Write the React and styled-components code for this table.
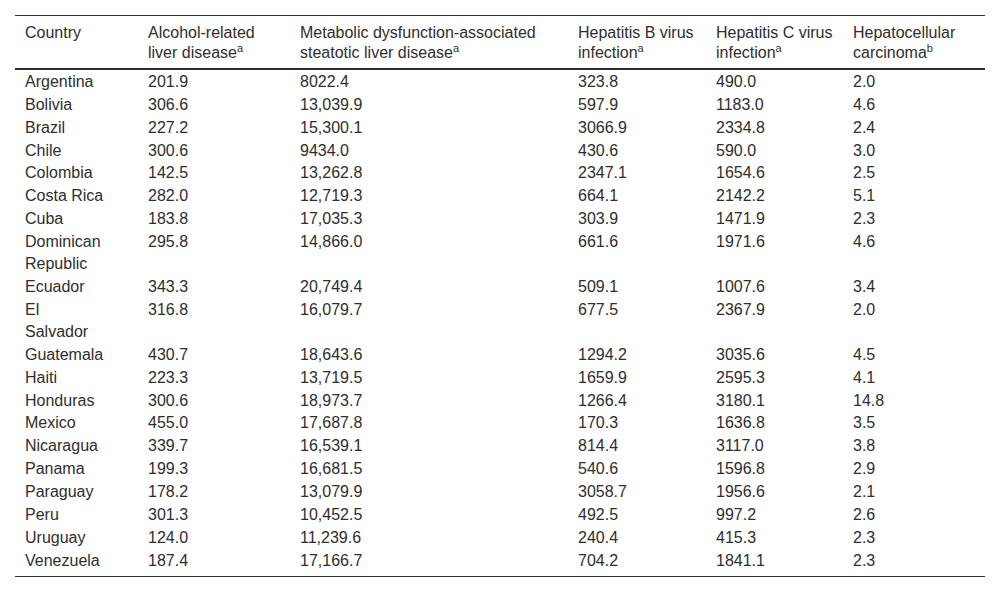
import React from 'react';
import styled, { createGlobalStyle } from 'styled-components';

const GlobalStyle = createGlobalStyle`
  html, body {
    margin: 0;
    padding: 0;
    background: #fff;
  }
  body {
    font-family: "Liberation Sans", Arial, sans-serif;
    color: #2e2e2e;
  }
`;

const Page = styled.div`
  padding: 15px;
`;

const Table = styled.table`
  width: 970px;
  table-layout: fixed;
  border-collapse: collapse;
  border-top: 1px solid #2e2e2e;
  border-bottom: 1px solid #2e2e2e;
  font-size: 16px;
`;

const HeadRow = styled.tr`
  border-bottom: 2px solid #2e2e2e;
`;

const HeadCell = styled.th`
  width: ${p => p.$w}px;
  box-sizing: border-box;
  text-align: left;
  vertical-align: top;
  font-weight: 400;
  line-height: 20px;
  padding: 7px 8px 5px 10px;
`;

const Row = styled.tr`
  &:last-child td {
    padding-bottom: 4px;
  }
`;

const Cell = styled.td`
  vertical-align: top;
  line-height: 22px;
  padding: 0.9px 0 0 10px;
`;

const CountryName = styled.span`
  display: block;
  max-width: 80px;
`;

const Sup = styled.sup`
  font-size: 11px;
  line-height: 0;
  vertical-align: 6px;
`;

const columns = [
  { w: 123, label: 'Country' },
  { w: 152, label: 'Alcohol-related liver disease', note: 'a' },
  { w: 278, label: 'Metabolic dysfunction-associated steatotic liver disease', note: 'a' },
  { w: 138, label: 'Hepatitis B virus infection', note: 'a' },
  { w: 137, label: 'Hepatitis C virus infection', note: 'a' },
  { w: 142, label: 'Hepatocellular carcinoma', note: 'b' },
];

const rows = [
  ['Argentina', '201.9', '8022.4', '323.8', '490.0', '2.0'],
  ['Bolivia', '306.6', '13,039.9', '597.9', '1183.0', '4.6'],
  ['Brazil', '227.2', '15,300.1', '3066.9', '2334.8', '2.4'],
  ['Chile', '300.6', '9434.0', '430.6', '590.0', '3.0'],
  ['Colombia', '142.5', '13,262.8', '2347.1', '1654.6', '2.5'],
  ['Costa Rica', '282.0', '12,719.3', '664.1', '2142.2', '5.1'],
  ['Cuba', '183.8', '17,035.3', '303.9', '1471.9', '2.3'],
  ['Dominican Republic', '295.8', '14,866.0', '661.6', '1971.6', '4.6'],
  ['Ecuador', '343.3', '20,749.4', '509.1', '1007.6', '3.4'],
  ['El Salvador', '316.8', '16,079.7', '677.5', '2367.9', '2.0'],
  ['Guatemala', '430.7', '18,643.6', '1294.2', '3035.6', '4.5'],
  ['Haiti', '223.3', '13,719.5', '1659.9', '2595.3', '4.1'],
  ['Honduras', '300.6', '18,973.7', '1266.4', '3180.1', '14.8'],
  ['Mexico', '455.0', '17,687.8', '170.3', '1636.8', '3.5'],
  ['Nicaragua', '339.7', '16,539.1', '814.4', '3117.0', '3.8'],
  ['Panama', '199.3', '16,681.5', '540.6', '1596.8', '2.9'],
  ['Paraguay', '178.2', '13,079.9', '3058.7', '1956.6', '2.1'],
  ['Peru', '301.3', '10,452.5', '492.5', '997.2', '2.6'],
  ['Uruguay', '124.0', '11,239.6', '240.4', '415.3', '2.3'],
  ['Venezuela', '187.4', '17,166.7', '704.2', '1841.1', '2.3'],
];

export default function App() {
  return (
    <Page>
      <GlobalStyle />
      <Table>
        <thead>
          <HeadRow>
            {columns.map(col => (
              <HeadCell key={col.label} $w={col.w}>
                {col.label}
                {col.note && <Sup>{col.note}</Sup>}
              </HeadCell>
            ))}
          </HeadRow>
        </thead>
        <tbody>
          {rows.map(([country, ...values]) => (
            <Row key={country}>
              <Cell>
                <CountryName>{country}</CountryName>
              </Cell>
              {values.map((v, i) => (
                <Cell key={i}>{v}</Cell>
              ))}
            </Row>
          ))}
        </tbody>
      </Table>
    </Page>
  );
}
